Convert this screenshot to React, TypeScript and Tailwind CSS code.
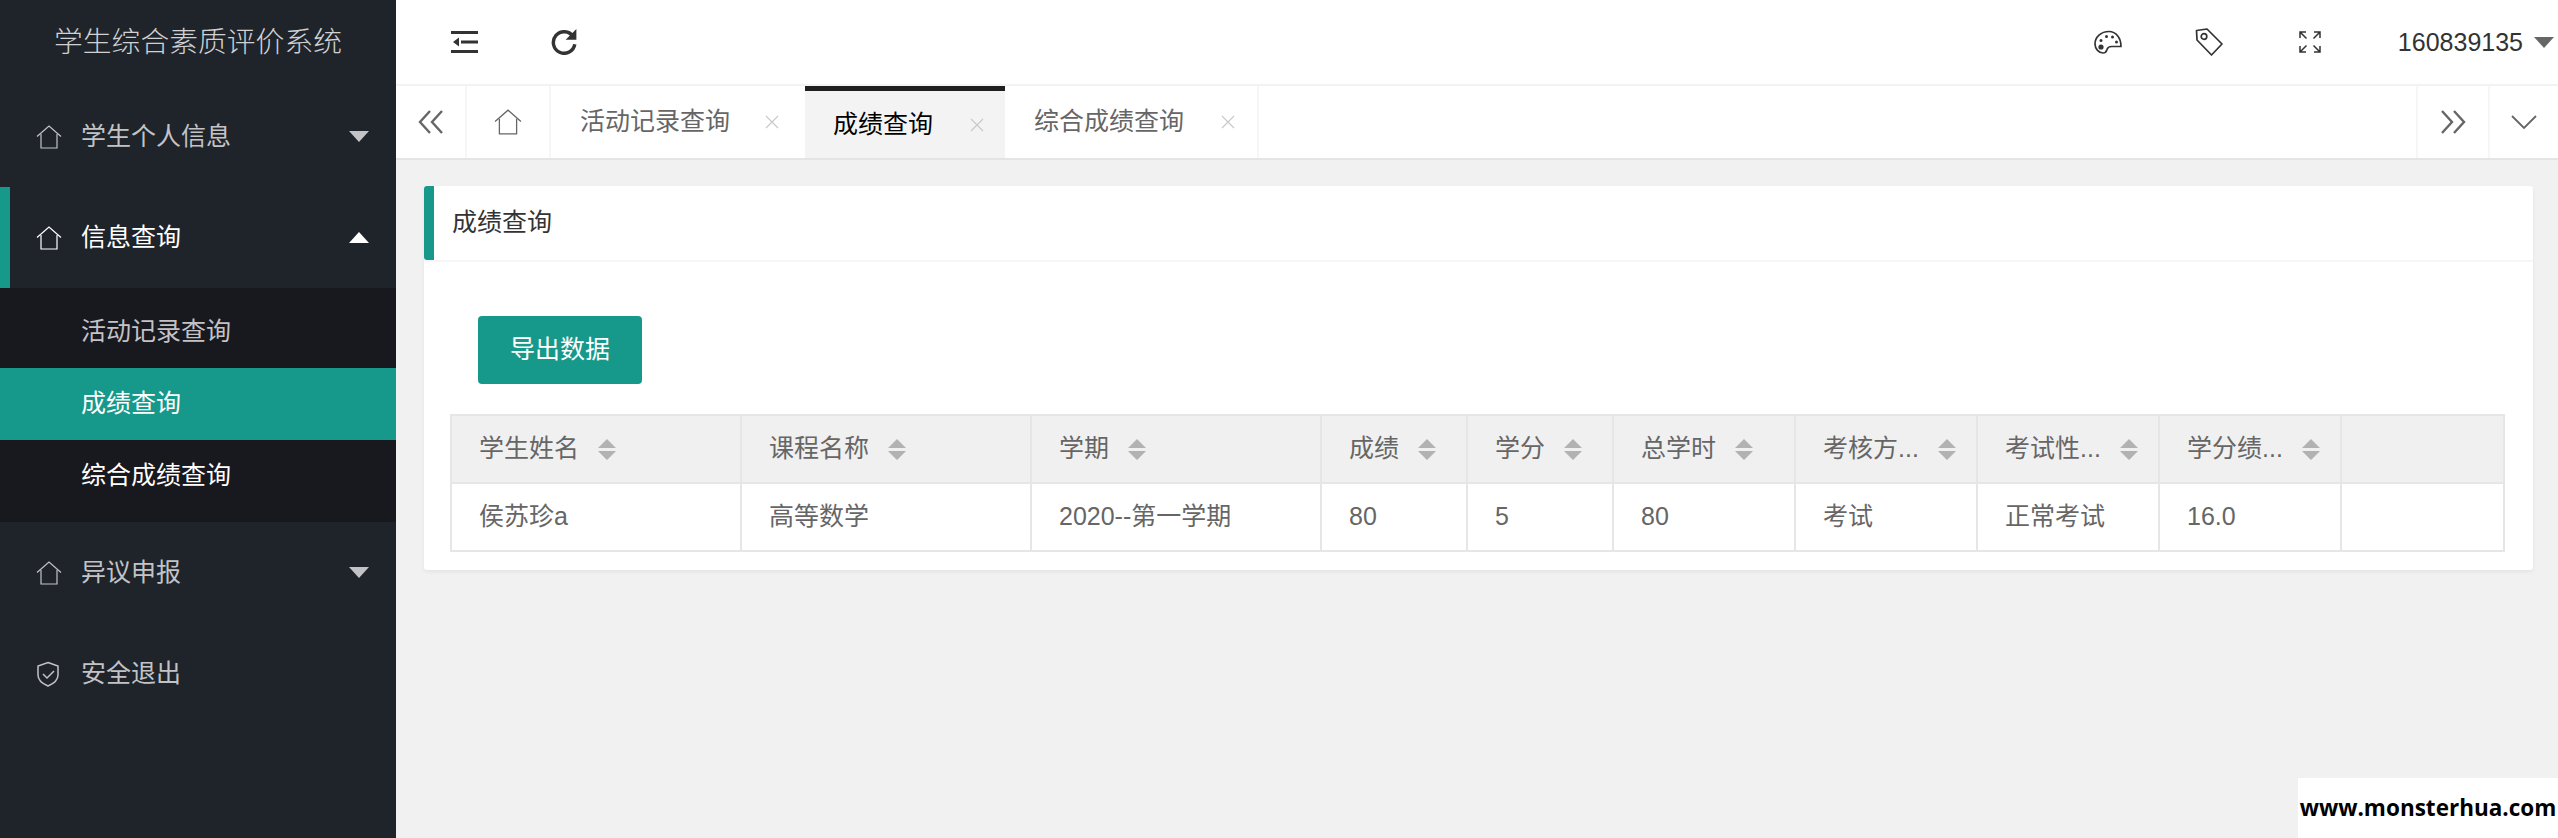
import React from "react";

const font = { fontFamily: '"Liberation Sans", "Noto Sans CJK SC", sans-serif' };

function HomeIcon({ className = "" }: { className?: string }) {
  return (
    <svg viewBox="0 0 26 24" className={className} fill="none" stroke="currentColor" strokeWidth="1.2">
      <path d="M1 11.5 13 1l12 10.5" />
      <path d="M5 9v14h16V9" />
    </svg>
  );
}

function ShieldIcon() {
  return (
    <svg viewBox="0 0 24 26" className="h-[26px] w-[24px]" fill="none" stroke="currentColor" strokeWidth="1.5">
      <path d="M12 1.5 22 5v9c0 5-4 8.5-10 11C6 22.500 2 19 2 14V5z" />
      <path d="m7 13 4 4 7-7" />
    </svg>
  );
}

function Caret({ up = false, color }: { up?: boolean; color: string }) {
  return (
    <svg viewBox="0 0 20 11" className={`h-[11px] w-[20px] ${color}`} fill="currentColor">
      <path d={up ? "M10 0 20 11H0z" : "M0 0h20L10 11z"} />
    </svg>
  );
}

function MenuItem({
  label,
  active = false,
  open = false,
  shield = false,
  caret = true,
}: {
  label: string;
  active?: boolean;
  open?: boolean;
  shield?: boolean;
  caret?: boolean;
}) {
  return (
    <div
      className={`flex h-[101px] items-center pr-[27px] ${
        active ? "border-l-[10px] border-[#16998a] pl-[26px] text-white" : "pl-[36px] text-[#c3c3c6]"
      }`}
    >
      <span className="flex w-[45px] items-center">{shield ? <ShieldIcon /> : <HomeIcon className="h-[24px] w-[26px]" />}</span>
      <span className="flex-1 text-[25px]">{label}</span>
      {caret && <Caret up={open} color={open ? "text-white" : "text-[#c3c3c6]"} />}
    </div>
  );
}

function SubItem({ label, active = false, white = false }: { label: string; active?: boolean; white?: boolean }) {
  return (
    <div
      className={`flex h-[72px] items-center pl-[81px] text-[25px] ${active ? "bg-[#16998a] text-white" : white ? "text-white" : "text-[#c3c3c6]"}`}
    >
      {label}
    </div>
  );
}

function Sidebar() {
  return (
    <aside className="flex h-[838px] w-[396px] shrink-0 flex-col bg-[#1f242b]">
      <div className="flex h-[86px] items-center justify-center text-[28.8px] font-light text-[#d0d1d3]">学生综合素质评价系统</div>
      <MenuItem label="学生个人信息" />
      <MenuItem label="信息查询" active open />
      <div className="bg-[#18181f] pb-[10px] pt-[8px]">
        <SubItem label="活动记录查询" />
        <SubItem label="成绩查询" active />
        <SubItem label="综合成绩查询" white />
      </div>
      <MenuItem label="异议申报" />
      <MenuItem label="安全退出" shield caret={false} />
    </aside>
  );
}

function TopBar() {
  return (
    <header className="flex h-[86px] items-center border-b-2 border-[#f3f3f3] bg-white text-[#333]">
      <svg viewBox="0 0 27 22" className="ml-[55px] h-[22px] w-[27px]" fill="currentColor">
        <rect x="0" y="0" width="27" height="3" />
        <rect x="0" y="19" width="27" height="3" />
        <rect x="10" y="9.500" width="17" height="3" />
        <path d="M2 11l6-4.500v9z" />
      </svg>
      <svg viewBox="0 0 26 24" className="ml-[72px] h-[26px] w-[28px]" fill="none" stroke="currentColor" strokeWidth="3.200">
        <path d="M21.500 7A10 10 0 1 0 23 14" />
        <path d="M24.500 0v10h-10z" fill="currentColor" stroke="none" />
      </svg>
      <div className="flex-1" />
      <svg viewBox="0 0 28 24" className="h-[24px] w-[28px]" fill="none" stroke="currentColor" strokeWidth="1.700">
        <path d="M15 1.500C7 1.500 1 7 1 14c0 5 4 9 8 9 3 0 3.500-2 4-3.500.6-2 2-3 4.500-3H27C27 8 22 1.500 15 1.500z" strokeLinejoin="round" />
        <circle cx="7" cy="17" r="2.600" fill="currentColor" stroke="none" />
        <circle cx="7" cy="10.500" r="1.500" fill="currentColor" stroke="none" />
        <circle cx="12.500" cy="6.500" r="1.500" fill="currentColor" stroke="none" />
        <circle cx="18.500" cy="7" r="1.500" fill="currentColor" stroke="none" />
        <circle cx="22.500" cy="12" r="1.500" fill="currentColor" stroke="none" />
      </svg>
      <svg viewBox="0 0 28 28" className="ml-[73px] h-[28px] w-[28px]" fill="none" stroke="currentColor" strokeWidth="1.700">
        <path d="M1.500 2.500 12 1l15 15-10.500 11L2 12z" strokeLinejoin="round" />
        <circle cx="9" cy="8.500" r="2.800" />
      </svg>
      <svg viewBox="0 0 22 22" className="ml-[76px] h-[22px] w-[22px]" fill="none" stroke="currentColor" strokeWidth="1.500">
        <path d="M1 7V1h6M1 1l6.500 6.500M15 1h6v6M21 1l-6.500 6.500M1 15v6h6M1 21l6.500-6.500M15 21h6v-6M21 21l-6.500-6.500" />
      </svg>
      <span className="ml-[77px] text-[25px] leading-none">160839135</span>
      <span className="ml-[11px] mr-[4px]">
        <Caret color="text-[#666]" />
      </span>
    </header>
  );
}

function Tab({ label, active = false, width, gap }: { label: string; active?: boolean; width: string; gap: string }) {
  return (
    <div
      className={`flex h-full items-center ${width} ${active ? "border-t-[5px] border-[#1f1f1f] bg-[#f3f3f3] pl-[28px] text-black" : "border-r-2 border-[#f6f6f6] pl-[29px] text-[#666]"}`}
    >
      <span className="text-[25px]">{label}</span>
      <svg viewBox="0 0 14 14" className={`h-[14px] w-[14px] ${gap}`} fill="none" stroke="#c9c9c9" strokeWidth="1.200">
        <path d="m1 1 12 12M13 1 1 13" />
      </svg>
    </div>
  );
}

function TabBar() {
  return (
    <div className="flex h-[74px] items-stretch border-b-2 border-[#e4e4e4] bg-white text-[#666]">
      <div className="flex w-[71px] items-center justify-center border-r-2 border-[#f6f6f6]">
        <svg viewBox="0 0 26 26" className="h-[26px] w-[26px]" fill="none" stroke="currentColor" strokeWidth="2.400">
          <path d="M12 2 2 13l10 11M24 2 14 13l10 11" />
        </svg>
      </div>
      <div className="flex w-[84px] items-center justify-center border-r-2 border-[#f6f6f6]">
        <HomeIcon className="h-[26px] w-[28px]" />
      </div>
      <Tab label="活动记录查询" width="w-[254px] !border-r-0" gap="ml-[35px]" />
      <Tab label="成绩查询" active width="w-[200px]" gap="ml-[37px]" />
      <Tab label="综合成绩查询" width="w-[254px]" gap="ml-[37px]" />
      <div className="flex-1" />
      <div className="flex w-[72px] items-center justify-center border-l-2 border-[#f6f6f6]">
        <svg viewBox="0 0 26 26" className="h-[26px] w-[26px]" fill="none" stroke="currentColor" strokeWidth="2.400">
          <path d="m2 2 10 11L2 24M14 2l10 11-10 11" />
        </svg>
      </div>
      <div className="flex w-[70px] items-center justify-center border-l-2 border-[#f6f6f6]">
        <svg viewBox="0 0 26 14" className="h-[14px] w-[26px]" fill="none" stroke="currentColor" strokeWidth="1.800">
          <path d="m1 1 12 12L25 1" />
        </svg>
      </div>
    </div>
  );
}

function SortIcon() {
  return (
    <svg viewBox="0 0 18 21" className="ml-[19px] h-[21px] w-[18px] shrink-0" fill="#b2b2b2">
      <path d="M9 0l9 9H0zM0 12h18l-9 9z" />
    </svg>
  );
}

const columns = [
  { t: "学生姓名", v: "侯苏珍a", w: "w-[290px]" },
  { t: "课程名称", v: "高等数学", w: "w-[290px]" },
  { t: "学期", v: "2020--第一学期", w: "w-[290px]" },
  { t: "成绩", v: "80", w: "w-[146px]" },
  { t: "学分", v: "5", w: "w-[146px]" },
  { t: "总学时", v: "80", w: "w-[182px]" },
  { t: "考核方...", v: "考试", w: "w-[182px]" },
  { t: "考试性...", v: "正常考试", w: "w-[182px]" },
  { t: "学分绩...", v: "16.0", w: "w-[182px]" },
];

function GradeTable() {
  return (
    <table className="w-[2055px] table-fixed border-collapse text-[25px] text-[#666]">
      <thead>
        <tr className="h-[68px] bg-[#f0f0f0]">
          {columns.map((c) => (
            <th key={c.t} className={`${c.w} border-2 border-[#e6e6e6] pl-[27px] text-left font-normal`}>
              <div className="flex items-center whitespace-nowrap">
                {c.t}
                <SortIcon />
              </div>
            </th>
          ))}
          <th className="border-2 border-[#e6e6e6]" />
        </tr>
      </thead>
      <tbody>
        <tr className="h-[68px]">
          {columns.map((c) => (
            <td key={c.t} className="whitespace-nowrap border-2 border-[#e6e6e6] pl-[27px]">
              {c.v}
            </td>
          ))}
          <td className="border-2 border-[#e6e6e6]" />
        </tr>
      </tbody>
    </table>
  );
}

function Card() {
  return (
    <section className="rounded-[3px] bg-white shadow-[0_2px_4px_rgba(0,0,0,0.06)]">
      <div className="flex h-[76px] items-center rounded-tl-[3px] border-b-2 border-[#f6f6f6] text-[25px] text-[#333]">
        <span className="h-full w-[10px] rounded-l-[3px] bg-[#16998a]" />
        <span className="ml-[18px]">成绩查询</span>
      </div>
      <div className="pb-[18px] pl-[26px] pr-[27px]">
        <button className="ml-[28px] mt-[54px] h-[68px] w-[164px] rounded-[4px] bg-[#16998a] text-[25px] text-white">导出数据</button>
        <div className="mt-[30px]">
          <GradeTable />
        </div>
      </div>
    </section>
  );
}

export default function App() {
  return (
    <div className="relative flex h-[838px] w-[2558px] overflow-hidden bg-[#f1f1f1]" style={font}>
      <Sidebar />
      <main className="min-w-0 flex-1">
        <TopBar />
        <TabBar />
        <div className="pl-[28px] pr-[25px] pt-[26px]">
          <Card />
        </div>
      </main>
      <div
        className="absolute bottom-0 right-0 flex h-[60px] w-[260px] items-center justify-center bg-white text-[22.5px] font-bold text-black"
        style={{ fontFamily: '"Open Sans", sans-serif' }}
      >
        www.monsterhua.com
      </div>
    </div>
  );
}
